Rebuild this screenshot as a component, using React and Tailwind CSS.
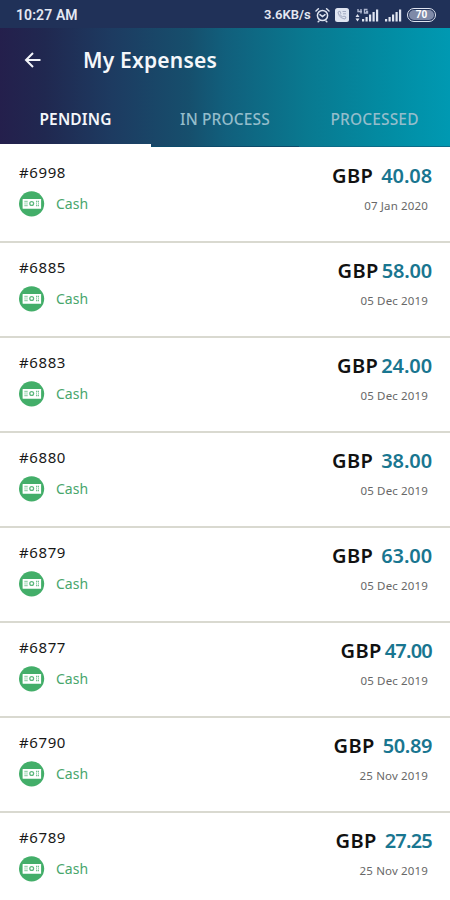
const expenses = [
  { id: '#6998', amount: '40.08', date: '07 Jan 2020', gap: 'gap-[8px]', tracking: 'tracking-[-0.1px]' },
  { id: '#6885', amount: '58.00', date: '05 Dec 2019', gap: 'gap-[3px]', tracking: 'tracking-[-0.2px]' },
  { id: '#6883', amount: '24.00', date: '05 Dec 2019', gap: 'gap-[3px]', tracking: 'tracking-[-0.1px]' },
  { id: '#6880', amount: '38.00', date: '05 Dec 2019', gap: 'gap-[8px]', tracking: 'tracking-[-0.1px]' },
  { id: '#6879', amount: '63.00', date: '05 Dec 2019', gap: 'gap-[8px]', tracking: 'tracking-[-0.1px]' },
  { id: '#6877', amount: '47.00', date: '05 Dec 2019', gap: 'gap-[3px]', tracking: 'tracking-[-0.8px]' },
  { id: '#6790', amount: '50.89', date: '25 Nov 2019', gap: 'gap-[8px]', tracking: 'tracking-[-0.4px]' },
  { id: '#6789', amount: '27.25', date: '25 Nov 2019', gap: 'gap-[8px]', tracking: 'tracking-[-0.8px]' },
];

function AlarmIcon() {
  return (
    <svg width="15" height="16" viewBox="0 0 15 16" fill="none" stroke="#dfe4f0" strokeWidth="1.5" strokeLinecap="round">
      <circle cx="7.5" cy="8.5" r="5.1" />
      <path d="M1 4 3.4 1.8M14 4 11.600 1.800M5 7.600l2.500 1.900 2.500-1.900M4 14l-.8.8M11 14l.8.8" />
    </svg>
  );
}

function VolteIcon() {
  return (
    <svg width="14" height="14" viewBox="0 0 14 14" fill="none">
      <rect width="14" height="14" rx="2.5" fill="#dfe4f0" />
      <path d="M3 4c.4 4 3 6.500 7 7l1-2-2.200-1-1 1C6.500 8.500 5.500 7.500 4.900 6.300l1-1L5 3.200Z" stroke="#a3abc2" strokeWidth="1" />
      <path d="M7.500 3.500h3.500M8 5.800h3" stroke="#a3abc2" strokeWidth="1" />
    </svg>
  );
}

function SignalIcon({ data }) {
  return (
    <svg width={data ? 24 : 17} height="14" viewBox={data ? '-7 0 24 14' : '0 0 17 14'} fill="#dfe4f0">
      <rect x="0" y="11" width="2.2" height="2.500" />
      <rect x="3.500" y="9" width="2.2" height="4.500" />
      <rect x="7" y="6.500" width="2.2" height="7" />
      <rect x="10.500" y="4" width="2.2" height="9.500" />
      <rect x="14" y="1.500" width="2.2" height="12" />
      {data && (
        <g>
          <path d="M-4 1v2.500h4M-1 1v4.500M5.500 1.500H2.500v3.500h3V3.500H4" fill="none" stroke="#aeb7cf" strokeWidth="1.4" />
          <path d="M-6.500 9h4l-2-3ZM-6.500 10.500h4l-2 3Z" />
        </g>
      )}
    </svg>
  );
}

function CashIcon() {
  return (
    <svg width="26" height="26" viewBox="0 0 26 26" fill="none">
      <circle cx="12.600" cy="12.800" r="12.600" fill="#43ae69" />
      <rect x="3.600" y="8" width="18.500" height="9.800" rx="0.500" fill="#fff" />
      <circle cx="12.700" cy="12.500" r="1.900" stroke="#5db87d" strokeWidth="1.300" />
      <path d="M5.500 10.500h3M5.500 14.500h3M17 10.500h3M17 14.500h3" stroke="#6fc08b" strokeWidth="1.300" strokeDasharray="1.200 0.600" />
      <path d="M6 11.600v1.800M8 11.600v1.800M17.500 11.600v1.800M19.500 11.600v1.800" stroke="#8fceaa" strokeWidth="0.900" />
    </svg>
  );
}

function StatusBar() {
  return (
    <div className="flex h-7 shrink-0 items-center justify-between bg-[#203158] pr-[14px] pl-[16px] font-[Roboto,sans-serif] text-[#e4e8f2]">
      <span className="pt-[2px] text-[14px] leading-4 font-semibold tracking-[0.1px] whitespace-nowrap">10:27 AM</span>
      <div className="flex h-full items-center pt-px">
        <span className="mr-[3px] w-[48px] text-[13px] leading-4 font-semibold whitespace-nowrap">3.6KB/s</span>
        <AlarmIcon />
        <span className="ml-[5px]"><VolteIcon /></span>
        <span className="ml-[6px]"><SignalIcon data /></span>
        <span className="ml-[6px]"><SignalIcon /></span>
        <span className="ml-[5px] flex h-[14px] w-[29px] items-center justify-center rounded-full border-[1.5px] border-[#dfe4f0] p-px">
          <span className="flex h-full w-full items-center justify-center rounded-full bg-[#7f8aa8] text-[10px] leading-none font-bold text-white">70</span>
        </span>
      </div>
    </div>
  );
}

function Header() {
  return (
    <header className="flex h-[119px] shrink-0 flex-col bg-[linear-gradient(90deg,#241f4c_0%,#202850_10%,#1d3b61_25%,#164f6d_42%,#115f7c_50%,#097990_68%,#028da4_87%,#0099b2_100%)]">
      <div className="flex h-[64px] items-center">
        <svg className="ml-[24px]" width="18" height="18" viewBox="0 0 18 18" fill="none" stroke="#f3f5fa" strokeWidth="2" strokeLinecap="square" strokeLinejoin="miter">
          <path d="M15.500 9H2.500M8.300 2.700 2 9l6.300 6.300" />
        </svg>
        <h1 className="ml-[41px] text-[21px] leading-7 font-semibold tracking-[0.2px] whitespace-nowrap text-[#f5f7fa]">My Expenses</h1>
      </div>
      <nav className="grid h-[55px] grid-cols-[151px_148px_151px] text-center text-[15.5px] leading-5 font-medium tracking-[0.15px] whitespace-nowrap text-[#94bdcb]">
        <span className="border-b-[3px] border-white pt-[17px] font-semibold text-[#f5f7fa]">PENDING</span>
        <span className="border-b border-[#0c4b6b] pt-[17px] font-medium">IN PROCESS</span>
        <span className="border-b border-[#0b6c89] pt-[17px] font-medium">PROCESSED</span>
      </nav>
    </header>
  );
}

function ExpenseRow({ item }) {
  return (
    <li className="flex h-[95px] shrink-0 justify-between border-b-2 border-[#d9d9d0] pr-[18px] pl-[19px]">
      <div>
        <div className="pt-[14px] text-[15px] leading-5 tracking-[0.6px] text-[#181818]">{item.id}</div>
        <div className="mt-[9px] flex items-center gap-[11px]">
          <CashIcon />
          <span className="text-[14px] leading-5 text-[#48a66c]">Cash</span>
        </div>
      </div>
      <div className="flex flex-col items-end">
        <div className={`flex pt-[16px] leading-6 font-semibold ${item.gap}`}>
          <span className="text-[20px] tracking-[0.4px] text-[#111]">GBP</span>
          <span className={`text-[20px] text-[#197690] ${item.tracking}`}>{item.amount}</span>
        </div>
        <div className="mt-[10px] mr-[4px] text-[11.5px] leading-4 tracking-[0.15px] text-[#686868]">{item.date}</div>
      </div>
    </li>
  );
}

export default function App() {
  return (
    <div className="flex h-[900px] w-[450px] flex-col overflow-hidden bg-white font-['Noto_Sans',sans-serif]">
      <StatusBar />
      <Header />
      <ul className="flex flex-col pt-px">
        {expenses.map((item) => (
          <ExpenseRow key={item.id} item={item} />
        ))}
      </ul>
    </div>
  );
}
